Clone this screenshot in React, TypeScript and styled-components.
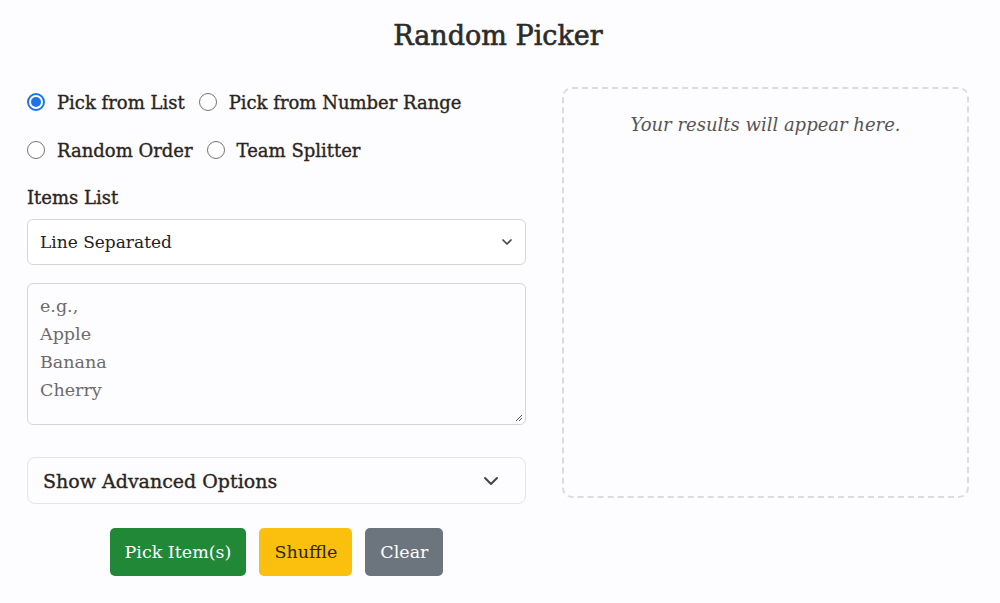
import React from "react";
import styled, { createGlobalStyle } from "styled-components";

const Global = createGlobalStyle`
  html, body { margin: 0; padding: 0; background: #fdfcfe; }
  body { font-family: "DejaVu Serif", "Liberation Serif", serif; color: #222; }
  * { box-sizing: border-box; }
`;

const Card = styled.div`
  width: 1000px;
  height: 603px;
  background: #fdfcfe;
  padding: 18px 31px 0 27px;
`;

const Title = styled.h1`
  margin: 0 0 33px;
  text-align: center;
  font-size: 27px;
  font-weight: 500;
  line-height: 36px;
  color: #2b2b2b;
  -webkit-text-stroke: 0.6px #2b2b2b;
`;

const Columns = styled.div`
  display: grid;
  grid-template-columns: 499px 407px;
  column-gap: 36px;
  align-items: start;
`;

const Left = styled.div`
  display: flex;
  flex-direction: column;
`;

const RadioRow = styled.div<{ first?: boolean }>`
  display: flex;
  align-items: center;
  height: 48px;
  margin-top: ${(p) => (p.first ? "-9px" : "0")};
`;

const RadioLabel = styled.label`
  display: flex;
  align-items: center;
  margin-right: 14px;
  font-size: 18px;
  font-weight: 500;
  color: #2a2520;
  -webkit-text-stroke: 0.35px #2a2520;
  cursor: pointer;
`;

const RadioCircle = styled.span<{ checked?: boolean }>`
  width: 18px;
  height: 18px;
  border-radius: 50%;
  margin-right: 12px;
  border: ${(p) => (p.checked ? "2px solid #1a73e8" : "1.5px solid #767676")};
  background: #fff;
  display: flex;
  align-items: center;
  justify-content: center;
  -webkit-text-stroke: 0;
  &::after {
    content: "";
    display: ${(p) => (p.checked ? "block" : "none")};
    width: 10px;
    height: 10px;
    border-radius: 50%;
    background: #1a73e8;
  }
`;

const FieldLabel = styled.div`
  margin-top: 11px;
  font-size: 18px;
  font-weight: 500;
  line-height: 26px;
  color: #2a2520;
  -webkit-text-stroke: 0.35px #2a2520;
`;

const Select = styled.div`
  margin-top: 8px;
  height: 46px;
  border: 1px solid #d6d6d9;
  border-radius: 6px;
  background: #fff;
  display: flex;
  align-items: center;
  justify-content: space-between;
  padding: 0 10px 0 12px;
  font-size: 17px;
  color: #222;
`;

const TextArea = styled.div`
  margin-top: 18px;
  height: 142px;
  border: 1px solid #d6d6d9;
  border-radius: 6px;
  background: #fdfcfe;
  padding: 8px 12px;
  font-size: 17.5px;
  line-height: 28px;
  color: #6e6a6a;
  position: relative;
`;

const Grip = styled.svg`
  position: absolute;
  right: 2px;
  bottom: 2px;
`;

const Advanced = styled.div`
  margin-top: 32px;
  height: 47px;
  border: 1px solid #e4e3e8;
  border-radius: 8px;
  background: #fdfcfe;
  display: flex;
  align-items: center;
  justify-content: space-between;
  padding: 0 22px 0 15px;
  font-size: 19px;
  font-weight: 500;
  color: #2a2520;
  -webkit-text-stroke: 0.35px #2a2520;
`;

const Buttons = styled.div`
  margin-top: 24px;
  display: flex;
  justify-content: center;
  gap: 13px;
`;

const Btn = styled.button<{ bg: string; fg: string }>`
  height: 48px;
  padding: 0 15px;
  border: none;
  border-radius: 5px;
  background: ${(p) => p.bg};
  color: ${(p) => p.fg};
  font-family: inherit;
  font-size: 17.5px;
`;

const Results = styled.div`
  height: 411px;
  border: 2px dashed #dcdbe0;
  border-radius: 10px;
  padding-top: 25px;
  text-align: center;
  font-style: italic;
  font-size: 18px;
  color: #555;
`;

const Chevron = ({ size, stroke }: { size: number; stroke: number }) => (
  <svg width={size} height={size} viewBox="0 0 24 24" fill="none" stroke="#444" strokeWidth={stroke} strokeLinecap="round" strokeLinejoin="round">
    <polyline points="6 9 12 15 18 9" />
  </svg>
);

export default function App() {
  return (
    <Card>
      <Global />
      <Title>Random Picker</Title>
      <Columns>
        <Left>
          <RadioRow first>
            <RadioLabel><RadioCircle checked />Pick from List</RadioLabel>
            <RadioLabel><RadioCircle />Pick from Number Range</RadioLabel>
          </RadioRow>
          <RadioRow>
            <RadioLabel><RadioCircle />Random Order</RadioLabel>
            <RadioLabel><RadioCircle />Team Splitter</RadioLabel>
          </RadioRow>
          <FieldLabel>Items List</FieldLabel>
          <Select>
            <span>Line Separated</span>
            <Chevron size={16} stroke={2.5} />
          </Select>
          <TextArea>
            e.g.,<br />Apple<br />Banana<br />Cherry
            <Grip width="10" height="10" viewBox="0 0 10 10">
              <path d="M9 3 L3 9 M9 6 L6 9" stroke="#555" strokeWidth="1" />
            </Grip>
          </TextArea>
          <Advanced>
            <span>Show Advanced Options</span>
            <Chevron size={24} stroke={2} />
          </Advanced>
          <Buttons>
            <Btn bg="#218838" fg="#fff">Pick Item(s)</Btn>
            <Btn bg="#fbbf0e" fg="#2a2520">Shuffle</Btn>
            <Btn bg="#6c757d" fg="#fff">Clear</Btn>
          </Buttons>
        </Left>
        <Results>Your results will appear here.</Results>
      </Columns>
    </Card>
  );
}
